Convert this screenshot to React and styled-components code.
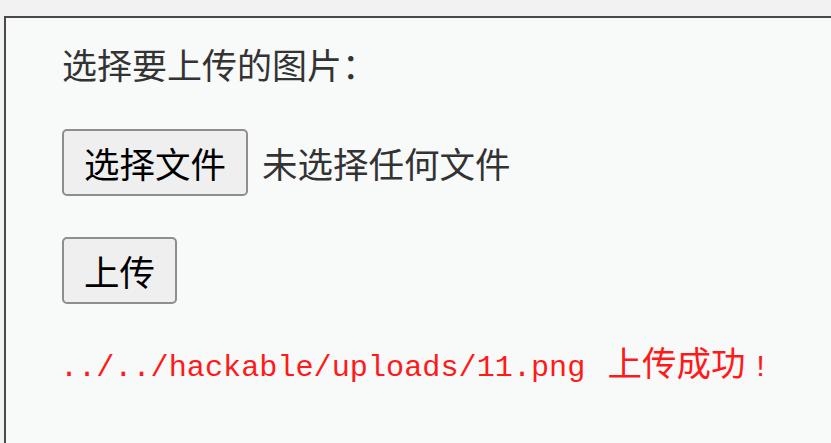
import React from "react";
import styled, { createGlobalStyle } from "styled-components";

const GlobalStyle = createGlobalStyle`
  html, body {
    margin: 0;
    padding: 0;
    background: #f2f2f2;
    height: 100%;
    overflow: hidden;
  }
  #root {
    height: 100%;
  }
`;

const Panel = styled.div`
  margin: 16px 0 0 4px;
  height: calc(100% - 16px);
  box-sizing: border-box;
  border-top: 2px solid #4a4a4a;
  border-left: 2px solid #4a4a4a;
  background: #f8f9f9;
  padding: 26px 0 0 56px;
  font-family: "Noto Sans CJK SC", "Noto Sans", sans-serif;
`;

const Label = styled.p`
  margin: 0;
  font-size: 35px;
  line-height: 40px;
  color: #333;
`;

const Row = styled.div`
  display: flex;
  align-items: center;
  gap: 14px;
  margin-top: ${(p) => p.$top}px;
`;

const Button = styled.button`
  height: 67px;
  padding: 0 20px;
  border: 2px solid #8e8e8e;
  border-radius: 5px;
  background: #efefef;
  color: #000;
  font-family: "Noto Sans CJK SC", "Noto Sans", sans-serif;
  font-size: 35.5px;
  line-height: 1;
  cursor: default;
`;

const FileName = styled.span`
  font-size: 35.5px;
  color: #333;
`;

const Message = styled.pre`
  margin: 42px 0 0 -2px;
  font-family: "Liberation Mono", monospace;
  font-size: 30.2px;
  line-height: 40px;
  color: #ff1a1a;
`;

const Cjk = styled.span`
  font-family: "Noto Sans CJK SC", sans-serif;
  font-size: 34.5px;
  line-height: 30px;
  margin: 0 6px 0 4px;
`;

export default function App() {
  return (
    <>
      <GlobalStyle />
      <Panel>
        <Label>选择要上传的图片：</Label>
        <Row $top={45}>
          <Button type="button">选择文件</Button>
          <FileName>未选择任何文件</FileName>
        </Row>
        <Row $top={41}>
          <Button type="button">上传</Button>
        </Row>
        <Message>
          ../../hackable/uploads/11.png <Cjk>上传成功</Cjk>!
        </Message>
      </Panel>
    </>
  );
}
